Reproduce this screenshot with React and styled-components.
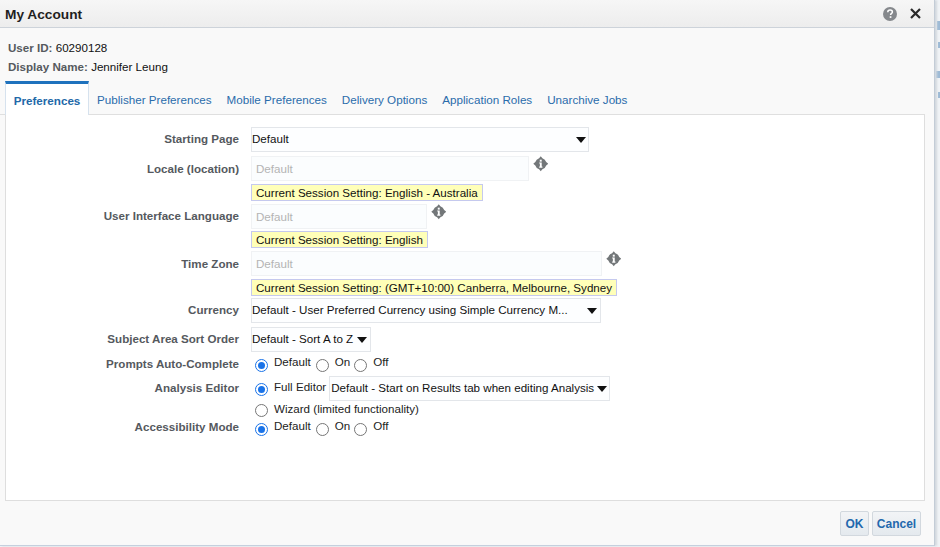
import React from "react";
import styled, { createGlobalStyle } from "styled-components";

const Global = createGlobalStyle`
  html, body { margin: 0; padding: 0; width: 940px; height: 547px; overflow: hidden; background: #f0f3f6; }
  body { font-family: "Liberation Sans", Arial, sans-serif; font-size: 11.6px; color: #111; }
`;
const Backdrop = styled.div`
  position: absolute; top: 0; right: 0; width: 4px; display: flex; flex-direction: column; align-items: flex-end;
`;
const BackdropMark = styled.span`
  width: ${p => p.$w}px; height: ${p => p.$h}px; margin-top: ${p => p.$mt}px; background: #9dbad6;
`;
const Dialog = styled.div`
  position: relative; width: 935px; height: 546px; box-sizing: border-box; background: #f9f9f9;
  border-right: 1px solid #c3ccd6; border-bottom: 1px solid #c5d0de;
  display: flex; flex-direction: column; box-shadow: 2px 0 2px #d3d8de;
`;
const TitleBar = styled.header`
  height: 28px; box-sizing: border-box; flex: none; display: flex; align-items: center;
  justify-content: space-between; padding: 0 13px 0 5px;
  background: linear-gradient(#f6f6f6, #ededed); border-bottom: 1px solid #cdd3da;
`;
const Title = styled.h1`
  margin: 0; padding-top: 1px; font-size: 13.7px; font-weight: 700; color: #1f1f1f;
`;
const TitleIcons = styled.div`
  display: flex; align-items: center; gap: 13px;
`;
const Info = styled.div`
  height: 53px; box-sizing: border-box; flex: none; padding: 13px 0 0 8px; display: flex;
  flex-direction: column; gap: 6px; line-height: 13px;
`;
const InfoLine = styled.div`
  color: #111; font-size: 11.6px;
  & > b { color: #55595e; font-weight: 700; }
`;
const Tabs = styled.nav`
  height: 34px; flex: none; display: flex; align-items: flex-start; padding-left: 5px; box-sizing: border-box;
  margin-right: 9px; border-bottom: 1px solid #dfdfdf;
`;
const Tab = styled.a`
  display: flex; align-items: center; box-sizing: border-box; height: ${p => (p.$active ? "34px" : "33px")};
  font-size: 11.65px; color: #2a6cab; white-space: nowrap; padding-top: 4px;
  ${p => p.$active
    ? `width: 84px; justify-content: center; font-weight: 700; background: #fff; border-top: 3px solid #1f72bd;
       border-left: 1px solid #d6e2ee; border-right: 1px solid #d6e2ee; padding-top: 1px; color: #2268a8; margin-right: 8px; z-index: 1;`
    : `margin-right: 15px;`}
`;
const Panel = styled.main`
  height: 386px; flex: none; box-sizing: border-box; margin: 0 9px 0 5px; background: #fff;
  border: 1px solid #dedede; border-top: 0; padding-top: 12px; display: flex; flex-direction: column;
`;
const Row = styled.div`
  display: grid; grid-template-columns: 233px auto; column-gap: 12px; justify-content: start;
  margin-top: ${p => p.$mt ?? 0}px; align-items: start;
`;
const Label = styled.label`
  font-weight: 700; color: #55595e; text-align: right; white-space: nowrap;
  line-height: 14px; padding-top: ${p => p.$pt ?? 5}px;
`;
const Field = styled.div`
  display: flex; flex-direction: column; align-items: flex-start;
`;
const Inline = styled.div`
  display: flex; align-items: flex-start;
`;
const Select = styled.div`
  width: ${p => p.$w}px; height: 25px; box-sizing: border-box; flex: none; display: flex; align-items: center;
  justify-content: space-between; background: #fdfeff; border: 1px solid #e3e6ea; white-space: nowrap;
  padding: 0 ${p => p.$pr ?? 2}px 2px ${p => p.$pl ?? 0}px; margin-left: ${p => p.$ml ?? 0}px; color: #111; line-height: 14px;
`;
const Arrow = styled.span`
  width: 0; height: 0; flex: none; border-left: 5px solid transparent; border-right: 5px solid transparent;
  border-top: 6px solid #111; margin-top: 2px;
`;
const Input = styled.div`
  width: ${p => p.$w}px; height: 25px; box-sizing: border-box; flex: none; display: flex; align-items: center;
  background: #fbfdfe; border: 1px solid #f0f2f4; padding-left: 4px; color: #b4b4b4;
`;
const Note = styled.div`
  margin-top: ${p => p.$mt ?? 3}px; height: 17px; box-sizing: border-box; display: flex; align-items: center;
  padding: 0 4px; background: #ffffb8; border: 1px solid #c5c9ee; color: #111; white-space: nowrap;
`;
const InfoIconWrap = styled.span`
  display: flex; margin: 0 0 0 3.5px;
`;
const RadioRow = styled.div`
  display: flex; align-items: flex-start; height: ${p => p.$h ?? 18}px;
`;
const RadioDot = styled.span`
  width: 13px; height: 13px; box-sizing: border-box; flex: none; border-radius: 50%;
  margin: ${p => p.$mt ?? 4}px 6px 0 ${p => p.$ml ?? 4}px;
  background: #fff; border: 1px solid ${p => (p.$on ? "#1a73e8" : "#767676")}; position: relative;
  ${p => p.$on ? `&::after { content: ""; position: absolute; inset: 2px; border-radius: 50%; background: #1a73e8; }` : ""}
`;
const RadioText = styled.span`
  line-height: 14px; padding-top: ${p => p.$pt ?? 0}px; white-space: nowrap; color: #222;
`;
const Footer = styled.footer`
  flex: 1; display: flex; justify-content: flex-end; align-items: flex-start; gap: 3px; padding: 10px 13px 0 0;
`;
const Button = styled.button`
  height: 25px; padding: 0; width: ${p => p.$w}px; box-sizing: border-box; font: 700 12px "Liberation Sans", Arial, sans-serif;
  color: #2368ad; background: linear-gradient(#f2f4f6, #e4e9ee); border: 1px solid #d2d8de; border-radius: 2px;
`;

const InfoIcon = () => (
  <InfoIconWrap>
    <svg width="15.5" height="15.5" viewBox="0 0 16 16">
      <path d="M8 0.3 L9.7 2.4 A5.8 5.8 0 0 1 13.6 6.3 L15.7 8 L13.6 9.7 A5.8 5.8 0 0 1 9.7 13.6 L8 15.7 L6.3 13.6 A5.8 5.8 0 0 1 2.4 9.7 L0.3 8 L2.4 6.3 A5.8 5.8 0 0 1 6.3 2.4 Z" fill="#737779" />
      <rect x="7" y="3.8" width="2" height="2" fill="#fff" />
      <path d="M6.4 6.6 H9 V10.8 H9.7 V12 H6.4 V10.8 H7.1 V7.7 H6.4 Z" fill="#fff" />
    </svg>
  </InfoIconWrap>
);

const Radio = ({ on, ml, mt, pt, children }) => (
  <>
    <RadioDot $on={on} $ml={ml} $mt={mt} />
    <RadioText $pt={pt}>{children}</RadioText>
  </>
);

const TriRadios = () => (
  <RadioRow>
    <Radio on>Default</Radio>
    <Radio ml={5}>On</Radio>
    <Radio ml={4}>Off</Radio>
  </RadioRow>
);

export default function App() {
  return (
    <>
      <Global />
      <Backdrop aria-hidden="true">
        <BackdropMark $w={3} $h={9} $mt={21} />
        <BackdropMark $w={2} $h={6} $mt={12} />
        <BackdropMark $w={4} $h={7} $mt={23} />
        <BackdropMark $w={2} $h={6} $mt={14} />
      </Backdrop>
      <Dialog>
        <TitleBar>
          <Title>My Account</Title>
          <TitleIcons>
            <svg width="14" height="14" viewBox="0 0 14 14">
              <circle cx="7" cy="7" r="7" fill="#85888c" />
              <path d="M4.8 5.2 C4.8 3.8 5.8 3.1 7.1 3.1 C8.4 3.1 9.4 3.9 9.4 5 C9.4 6.4 7.6 6.5 7.6 8.1" fill="none" stroke="#fff" strokeWidth="1.5" />
              <rect x="6.7" y="9.2" width="1.7" height="1.7" fill="#fff" />
            </svg>
            <svg width="11" height="11" viewBox="0 0 11 11">
              <path d="M1 1 L10 10 M10 1 L1 10" stroke="#2a2a2a" strokeWidth="2.2" />
            </svg>
          </TitleIcons>
        </TitleBar>
        <Info>
          <InfoLine><b>User ID:</b> 60290128</InfoLine>
          <InfoLine><b>Display Name:</b> Jennifer Leung</InfoLine>
        </Info>
        <Tabs>
          <Tab $active>Preferences</Tab>
          <Tab>Publisher Preferences</Tab>
          <Tab>Mobile Preferences</Tab>
          <Tab>Delivery Options</Tab>
          <Tab>Application Roles</Tab>
          <Tab>Unarchive Jobs</Tab>
        </Tabs>
        <Panel>
          <Row>
            <Label>Starting Page</Label>
            <Select $w={338} $pr={2}>Default<Arrow /></Select>
          </Row>
          <Row $mt={4}>
            <Label $pt={6}>Locale (location)</Label>
            <Field>
              <Inline><Input $w={278}>Default</Input><InfoIcon /></Inline>
              <Note>Current Session Setting: English - Australia</Note>
            </Field>
          </Row>
          <Row $mt={3}>
            <Label>User Interface Language</Label>
            <Field>
              <Inline><Input $w={176}>Default</Input><InfoIcon /></Inline>
              <Note $mt={2}>Current Session Setting: English</Note>
            </Field>
          </Row>
          <Row $mt={3}>
            <Label $pt={6}>Time Zone</Label>
            <Field>
              <Inline><Input $w={351}>Default</Input><InfoIcon /></Inline>
              <Note>Current Session Setting: (GMT+10:00) Canberra, Melbourne, Sydney</Note>
            </Field>
          </Row>
          <Row $mt={2}>
            <Label>Currency</Label>
            <Select $w={350} $pr={3}>Default - User Preferred Currency using Simple Currency M...<Arrow /></Select>
          </Row>
          <Row $mt={4}>
            <Label>Subject Area Sort Order</Label>
            <Select $w={120} $pr={3}>Default - Sort A to Z<Arrow /></Select>
          </Row>
          <Row $mt={3}>
            <Label $pt={2}>Prompts Auto-Complete</Label>
            <TriRadios />
          </Row>
          <Row $mt={3}>
            <Label>Analysis Editor</Label>
            <Field>
              <RadioRow $h={26}>
                <Radio on mt={7} pt={4}>Full Editor</Radio>
                <Select $w={281} $ml={3} $pl={1} $pr={2}>Default - Start on Results tab when editing Analysis<Arrow /></Select>
              </RadioRow>
              <RadioRow $h={17}>
                <Radio mt={2}>Wizard (limited functionality)</Radio>
              </RadioRow>
            </Field>
          </Row>
          <Row>
            <Label $pt={1}>Accessibility Mode</Label>
            <TriRadios />
          </Row>
        </Panel>
        <Footer>
          <Button $w={29}>OK</Button>
          <Button $w={49}>Cancel</Button>
        </Footer>
      </Dialog>
    </>
  );
}
